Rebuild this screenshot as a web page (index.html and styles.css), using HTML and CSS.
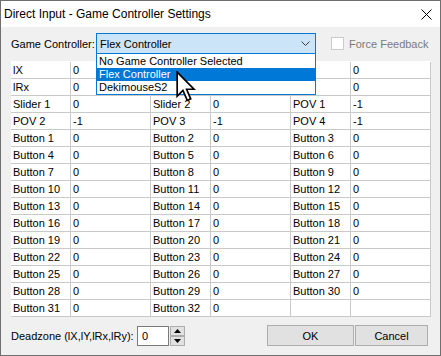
FILE: index.html
```html
<!DOCTYPE html>
<html>
<head>
<meta charset="utf-8">
<link rel="stylesheet" href="styles.css">
</head>
<body>
<div class="window">
  <div class="titlebar">
    <span class="title">Direct Input - Game Controller Settings</span>
    <svg class="close" width="11" height="11" viewBox="0 0 11 11"><path d="M0.5 0.5 L10.5 10.5 M10.5 0.5 L0.5 10.5" stroke="#000" stroke-width="1" fill="none"/></svg>
  </div>
  <div class="client">
    <div class="toprow">
      <span class="lbl lbl-gc">Game Controller:</span>
      <div class="combo-wrap">
        <div class="combo">
          <span>Flex Controller</span>
          <svg class="chev" width="9" height="6" viewBox="0 0 9 6"><path d="M0.5 0.5 L4.5 4.5 L8.5 0.5" stroke="#3c3c3c" fill="none" stroke-width="1"/></svg>
        </div>
        <div class="droplist">
          <div class="item first">No Game Controller Selected</div>
          <div class="item sel">Flex Controller</div>
          <div class="item">DekimouseS2</div>
        </div>
      </div>
      <span class="chk"></span>
      <span class="lbl disabled">Force Feedback</span>
    </div>
    <div class="grid">
      <div class="c">lX</div><div class="c v">0</div><div class="c"></div><div class="c v"></div><div class="c"></div><div class="c v">0</div>
      <div class="c">lRx</div><div class="c v">0</div><div class="c"></div><div class="c v"></div><div class="c"></div><div class="c v">0</div>
      <div class="c">Slider 1</div><div class="c v">0</div><div class="c">Slider 2</div><div class="c v">0</div><div class="c">POV 1</div><div class="c v">-1</div>
      <div class="c">POV 2</div><div class="c v">-1</div><div class="c">POV 3</div><div class="c v">-1</div><div class="c">POV 4</div><div class="c v">-1</div>
      <div class="c">Button 1</div><div class="c v">0</div><div class="c">Button 2</div><div class="c v">0</div><div class="c">Button 3</div><div class="c v">0</div>
      <div class="c">Button 4</div><div class="c v">0</div><div class="c">Button 5</div><div class="c v">0</div><div class="c">Button 6</div><div class="c v">0</div>
      <div class="c">Button 7</div><div class="c v">0</div><div class="c">Button 8</div><div class="c v">0</div><div class="c">Button 9</div><div class="c v">0</div>
      <div class="c">Button 10</div><div class="c v">0</div><div class="c">Button 11</div><div class="c v">0</div><div class="c">Button 12</div><div class="c v">0</div>
      <div class="c">Button 13</div><div class="c v">0</div><div class="c">Button 14</div><div class="c v">0</div><div class="c">Button 15</div><div class="c v">0</div>
      <div class="c">Button 16</div><div class="c v">0</div><div class="c">Button 17</div><div class="c v">0</div><div class="c">Button 18</div><div class="c v">0</div>
      <div class="c">Button 19</div><div class="c v">0</div><div class="c">Button 20</div><div class="c v">0</div><div class="c">Button 21</div><div class="c v">0</div>
      <div class="c">Button 22</div><div class="c v">0</div><div class="c">Button 23</div><div class="c v">0</div><div class="c">Button 24</div><div class="c v">0</div>
      <div class="c">Button 25</div><div class="c v">0</div><div class="c">Button 26</div><div class="c v">0</div><div class="c">Button 27</div><div class="c v">0</div>
      <div class="c">Button 28</div><div class="c v">0</div><div class="c">Button 29</div><div class="c v">0</div><div class="c">Button 30</div><div class="c v">0</div>
      <div class="c">Button 31</div><div class="c v">0</div><div class="c">Button 32</div><div class="c v">0</div><div class="c"></div><div class="c v"></div>
    </div>
    <div class="bottomrow">
      <span class="lbl lbl-dz">Deadzone (lX,lY,lRx,lRy):</span>
      <div class="edit">0</div>
      <div class="spin">
        <div class="sbtn"><svg width="7" height="4" viewBox="0 0 7 4"><path d="M3.5 0 L7 4 L0 4 Z" fill="#000"/></svg></div>
        <div class="sbtn"><svg width="7" height="4" viewBox="0 0 7 4"><path d="M0 0 L7 0 L3.5 4 Z" fill="#000"/></svg></div>
      </div>
      <div class="spacer"></div>
      <div class="btn btn-ok">OK</div>
      <div class="btn btn-cancel">Cancel</div>
    </div>
  </div>
  <svg class="cursor" width="20" height="32" viewBox="0 0 13 21"><path d="M0.7 0.7 L0.7 16.5 L4.5 12.8 L7.3 19.3 L9.6 18.3 L6.9 12 L11.9 12 Z" fill="#fff" stroke="#000" stroke-width="1.1" stroke-linejoin="miter"/></svg>
</div>
</body>
</html>
```

FILE: styles.css
```css
* { box-sizing: border-box; }
html, body { margin: 0; padding: 0; }
body {
  font-family: "Liberation Sans", Arial, sans-serif;
  font-size: 11px;
  color: #000;
  background: #f0f0f0;
}
.window {
  position: relative;
  width: 441px;
  height: 356px;
  border: 1px solid #6f6f6f;
  display: flex;
  flex-direction: column;
  overflow: hidden;
}
.titlebar {
  height: 26px;
  flex: none;
  background: #fff;
  display: flex;
  align-items: center;
  padding-left: 3px;
  padding-right: 8px;
}
.title {
  font-size: 12px;
  flex: 1;
}
.close { display: block; }
.client {
  flex: 1;
  background: #f0f0f0;
  padding: 6px 9px 0 10px;
  display: flex;
  flex-direction: column;
}
.toprow {
  height: 21px;
  display: flex;
  align-items: center;
}
.lbl { white-space: nowrap; }
.lbl-gc { width: 85px; flex: none; }
.combo-wrap {
  position: relative;
  width: 220px;
  height: 21px;
  flex: none;
  z-index: 5;
}
.combo {
  height: 21px;
  border: 1px solid #0078d7;
  background: #cce4f7;
  display: flex;
  align-items: center;
  padding-left: 3px;
  padding-right: 5px;
}
.combo span { flex: 1; }
.chev { display: block; }
.droplist {
  position: absolute;
  left: 0;
  top: 20px;
  width: 220px;
  background: #fff;
  border: 1px solid #0078d7;
}
.item {
  height: 13px;
  line-height: 13px;
  padding-left: 2px;
  white-space: nowrap;
}
.item.first { height: 14px; line-height: 14px; }
.item.sel { background: #0078d7; color: #fff; }
.chk {
  width: 13px;
  height: 13px;
  border: 1px solid #cccccc;
  background: #fff;
  margin-left: 15px;
  margin-right: 5px;
  flex: none;
}
.disabled { color: #7a7a7a; }
.grid {
  margin-top: 7px;
  width: 420px;
  display: grid;
  grid-template-columns: 60px 80px 60px 80px 60px 80px;
  grid-auto-rows: 17px;
  background: #fff;
  border-top: 1px solid #fff;
}
.c {
  border-right: 1px solid #c9c9c9;
  border-bottom: 1px solid #c9c9c9;
  padding-left: 2px;
  line-height: 16px;
  white-space: nowrap;
  overflow: hidden;
}
.bottomrow {
  margin-top: 8px;
  height: 21px;
  display: flex;
  align-items: center;
  padding-right: 3px;
}
.lbl-dz { width: 126px; flex: none; }
.edit {
  width: 32px;
  height: 20px;
  border: 1px solid #7a7a7a;
  background: #fff;
  padding-left: 4px;
  line-height: 18px;
}
.spin {
  margin-left: 1px;
  width: 15px;
  height: 20px;
  display: flex;
  flex-direction: column;
}
.sbtn {
  height: 10px;
  border: 1px solid #adadad;
  background: #e1e1e1;
  display: flex;
  align-items: center;
  justify-content: center;
}
.sbtn svg { display: block; }
.spacer { flex: 1; }
.btn {
  height: 21px;
  border: 1px solid #adadad;
  background: #e1e1e1;
  display: flex;
  align-items: center;
  justify-content: center;
}
.btn-ok { width: 87px; }
.btn-cancel { width: 73px; margin-left: 1px; }
.cursor {
  position: absolute;
  left: 175px;
  top: 70px;
  z-index: 10;
}
```
